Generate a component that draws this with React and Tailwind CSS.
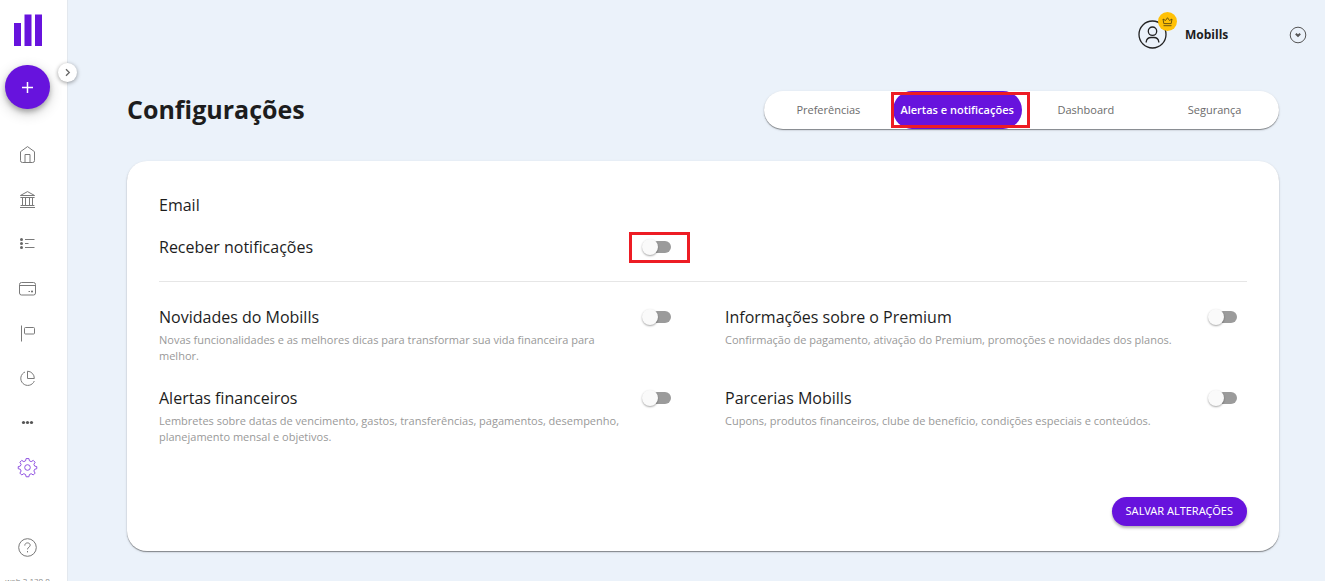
import React, { useState } from "react";

const icons = {
  home: (
    <>
      <path d="M3.5 7.7 10.5 2.6l7 5.1v8.9a1.9 1.9 0 0 1-1.9 1.9H5.4a1.9 1.9 0 0 1-1.9-1.9z" />
      <path d="M8 18.5V10.5h5v8" />
    </>
  ),
  bank: (
    <>
      <path d="M10.5 2.6 17.6 6.5H3.4zM3.4 8.5h14.2M5.5 9v7M8.5 9v7M12.5 9v7M15.5 9v7M3.6 16.5h13.8M3 18.5h15" />
    </>
  ),
  list: (
    <>
      <path d="M8 6.5h9.5M8 10.5h3.5M8 14.5h9.5" />
      <g fill="#666" stroke="none">
        <circle cx="4.5" cy="6.5" r="1.5" />
        <circle cx="4.5" cy="10.5" r="1.5" />
        <circle cx="4.5" cy="14.5" r="1.5" />
      </g>
    </>
  ),
  card: (
    <>
      <rect x="2.5" y="4.5" width="16" height="12.5" rx="2" />
      <path d="M2.5 7.5h16M11.5 13.5h1.5" />
      <circle cx="15" cy="13.5" r="1" fill="#666" stroke="none" />
    </>
  ),
  flag: (
    <>
      <path d="M4.5 2.5v16" />
      <rect x="7.5" y="4.5" width="10" height="6.5" rx="1" />
    </>
  ),
  pie: (
    <>
      <path d="M8 4a7 7 0 1 0 9.3 9" />
      <path d="M10.5 3.2v7.3h6.8A7 7 0 0 0 10.5 3.2z" />
    </>
  ),
  more: (
    <g fill="#555" stroke="none">
      <circle cx="6.5" cy="10.5" r="1.6" />
      <circle cx="10.5" cy="10.5" r="1.6" />
      <circle cx="14.5" cy="10.5" r="1.6" />
    </g>
  ),
};

const menu = [
  ["home", "Início"],
  ["bank", "Contas"],
  ["list", "Transações"],
  ["card", "Cartões"],
  ["flag", "Objetivos"],
  ["pie", "Relatórios"],
  ["more", "Mais"],
];

function Gear() {
  return (
    <svg viewBox="0 0 24 24" className="size-[21px]" fill="none" stroke="#8b4be0" strokeWidth="1.1" strokeLinejoin="round">
      <circle cx="12" cy="12" r="3.2" />
      <path d="M10.4 1.8h3.2l.6 2.6 2 .9 2.4-1.4 2.1 2.1-1.4 2.4.9 2 2.4.6v2.4l-2.4.6-.9 2 1.4 2.4-2.1 2.1-2.4-1.4-2 .9-.6 2.6h-3.2l-.6-2.6-2-.9-2.4 1.4-2.1-2.1 1.4-2.4-.9-2-2.4-.6V11l2.4-.6.9-2-1.4-2.4 2.1-2.1 2.4 1.4 2-.9z" />
    </svg>
  );
}

function Sidebar() {
  return (
    <aside className="relative flex h-screen w-[68px] shrink-0 flex-col items-center border-r border-[#e3e8ee] bg-white pr-3">
      <a href="#inicio" aria-label="Mobills" className="mt-3.5 shrink-0">
        <svg width="28" height="32" viewBox="0 0 28 32" className="block" fill="#6713dd">
          <rect y="9" width="7" height="23" />
          <rect x="10.5" y="0.5" width="7" height="31.5" />
          <rect x="21" y="0.5" width="7" height="31.5" />
        </svg>
      </a>
      <button aria-label="Adicionar" className="mt-[19px] flex h-11 w-[45px] shrink-0 items-center justify-center rounded-full bg-[#6713dd] shadow-[0_3px_5px_rgba(0,0,0,0.25),0_4px_14px_rgba(0,0,0,0.2)]">
        <svg width="13" height="13" viewBox="0 0 13 13" stroke="#fff" strokeWidth="1.5">
          <path d="M6.5 1v11M1 6.5h11" />
        </svg>
      </button>
      <button aria-label="Expandir menu" className="absolute top-[63px] -right-2.5 z-10 flex size-[19px] items-center justify-center rounded-full bg-white shadow-[0_1px_4px_rgba(0,0,0,0.4)]">
        <svg width="9" height="9" viewBox="0 0 9 9" fill="none" stroke="#666" strokeWidth="1.3">
          <path d="m3 1.2 3.3 3.3L3 7.8" />
        </svg>
      </button>
      <nav className="mt-[23px] flex h-[358px] w-full shrink-0 flex-col">
        {menu.map(([icon, label]) => (
          <a key={icon} href={"#" + icon} aria-label={label} className="flex flex-1 items-center justify-center">
            <svg width="21" height="21" viewBox="0 0 21 21" fill="none" stroke="#7a7a7a" strokeWidth="1">
              {icons[icon]}
            </svg>
          </a>
        ))}
        <a href="#configuracoes" aria-label="Configurações" className="flex flex-1 items-center justify-center">
          <Gear />
        </a>
      </nav>
      <a href="#ajuda" aria-label="Ajuda" className="mt-auto shrink-0">
        <svg width="19" height="19" viewBox="0 0 19 19" className="block" fill="none" stroke="#777" strokeWidth="1">
          <circle cx="9.5" cy="9.5" r="8.8" />
          <path d="M6.8 7.6c0-1.7 1.1-2.7 2.7-2.7s2.7 1 2.7 2.3c0 1.9-2.7 2-2.7 4.2M9.5 13v1.4" />
        </svg>
      </a>
      <div className="mt-[18px] h-1.5 w-full shrink-0 overflow-hidden text-center text-[8px] leading-3 whitespace-nowrap text-[#888]">web 2.130.0</div>
    </aside>
  );
}

function Account() {
  return (
    <header className="flex items-center justify-end pr-[18px] pt-5">
      <div className="relative">
        <svg width="29" height="29" viewBox="0 0 29 29" className="block" fill="none" stroke="#222" strokeWidth="1.3">
          <circle cx="14.5" cy="14.5" r="13.5" />
          <circle cx="14.5" cy="11.2" r="4.2" />
          <path d="M8.2 22.5v-.7a5 5 0 0 1 5-4.3h2.6a5 5 0 0 1 5 4.3v.7" />
        </svg>
        <span className="absolute -top-2 -right-2.5 flex size-[19px] items-center justify-center rounded-full bg-[#ffc107]">
          <svg width="11" height="11" viewBox="0 0 11 11" fill="none" stroke="#5c4a10" strokeWidth="0.9">
            <path d="M1.8 7.6 1 3l2.5 1.5 2-2.8 2 2.8L10 3l-.8 4.6zM1.5 9.7h8" />
          </svg>
        </span>
      </div>
      <span className="ml-[18px] w-[104px] text-[12px] leading-5 font-bold text-[#1d1d1d]">Mobills</span>
      <button aria-label="Abrir menu da conta">
        <svg width="18" height="18" viewBox="0 0 18 18" className="block" fill="none" stroke="#555">
          <circle cx="9" cy="9" r="7.8" />
          <path d="m6.8 7.8 2.2 2 2.2-2" strokeWidth="2" />
        </svg>
      </button>
    </header>
  );
}

function Tabs() {
  const tabs = ["Preferências", "Alertas e notificações", "Dashboard", "Segurança"];
  const [active, setActive] = useState(1);
  return (
    <div className="relative w-[515px]">
      <div role="tablist" className="flex h-[38px] rounded-full bg-white shadow-[0_1px_1px_rgba(0,0,0,0.4),0_1px_3px_rgba(0,0,0,0.12)]">
        {tabs.map((tab, i) => (
          <button
            key={tab}
            role="tab"
            aria-selected={i === active}
            onClick={() => setActive(i)}
            className={
              i === active
                ? "flex-1 basis-0 rounded-full bg-[#6713dd] text-[11px] font-semibold whitespace-nowrap text-white"
                : "flex-1 basis-0 text-[11px] whitespace-nowrap text-[#6b6b6b]"
            }
          >
            {tab}
          </button>
        ))}
      </div>
      <div className="pointer-events-none absolute top-px left-[127px] h-9 w-[139px] border-3 border-[#ed1c24]" />
    </div>
  );
}

function Toggle({ id }) {
  return (
    <span className="relative mr-2.5 flex h-5 w-[29px] shrink-0 items-center">
      <input id={id} type="checkbox" role="switch" className="peer absolute inset-0 z-10 m-0 cursor-pointer opacity-0" />
      <span className="ml-0.5 h-3 w-full rounded-full bg-[#9b9b9b] peer-checked:bg-[#b389ee]" />
      <span className="absolute top-0.5 left-0 size-4 rounded-full bg-[#fafafa] shadow-[0_1px_2px_rgba(0,0,0,0.35)] peer-checked:translate-x-3 peer-checked:bg-[#6713dd]" />
    </span>
  );
}

function Setting({ id, title, children }) {
  return (
    <div className="flex items-start justify-between">
      <div className="w-[466px]">
        <label htmlFor={id} className="block text-[16px] leading-5 text-[#1d1d1d]">{title}</label>
        <p className="mt-[5px] text-[11px] leading-4 text-[#999]">{children}</p>
      </div>
      <Toggle id={id} />
    </div>
  );
}

export default function App() {
  return (
    <div className="flex h-screen overflow-hidden bg-[#ebf2fa] font-['Open_Sans','Noto_Sans',sans-serif]">
      <Sidebar />
      <div className="flex-1">
        <Account />
        <main className="pr-[46px] pl-[59px]">
          <div className="mt-[42px] flex items-start justify-between">
            <h1 className="text-[25px] leading-9 font-bold text-[#1d1d1d]">Configurações</h1>
            <Tabs />
          </div>
          <form onSubmit={(e) => e.preventDefault()} className="mt-8 rounded-[20px] bg-white px-8 pt-[34px] pb-[25px] shadow-[0_1px_1px_rgba(0,0,0,0.4),0_1px_3px_rgba(0,0,0,0.12)]">
            <h2 className="text-[16px] leading-5 text-[#1d1d1d]">Email</h2>
            <div className="grid grid-cols-2 gap-x-11 border-b border-[#e6e6e6] pt-[22px] pb-6">
              <div className="relative flex items-center justify-between">
                <label htmlFor="receber" className="text-[16px] leading-5 text-[#1d1d1d]">Receber notificações</label>
                <Toggle id="receber" />
                <div className="pointer-events-none absolute -top-[5px] -right-[9px] h-[31px] w-[61px] border-3 border-[#ed1c24]" />
              </div>
            </div>
            <div className="mt-[25px] grid grid-cols-2 gap-x-11 gap-y-6">
              <Setting id="novidades" title="Novidades do Mobills">
                Novas funcionalidades e as melhores dicas para transformar sua vida financeira para melhor.
              </Setting>
              <Setting id="premium" title="Informações sobre o Premium">
                Confirmação de pagamento, ativação do Premium, promoções e novidades dos planos.
              </Setting>
              <Setting id="alertas" title="Alertas financeiros">
                Lembretes sobre datas de vencimento, gastos, transferências, pagamentos, desempenho, planejamento mensal e objetivos.
              </Setting>
              <Setting id="parcerias" title="Parcerias Mobills">
                Cupons, produtos financeiros, clube de benefício, condições especiais e conteúdos.
              </Setting>
            </div>
            <div className="mt-[52px] flex justify-end">
              <button type="submit" className="h-[29px] rounded-full bg-[#6713dd] px-3.5 font-['Noto_Sans',sans-serif] text-[11px] whitespace-nowrap text-white shadow-[0_2px_3px_rgba(0,0,0,0.3)]">SALVAR ALTERAÇÕES</button>
            </div>
          </form>
        </main>
      </div>
    </div>
  );
}
